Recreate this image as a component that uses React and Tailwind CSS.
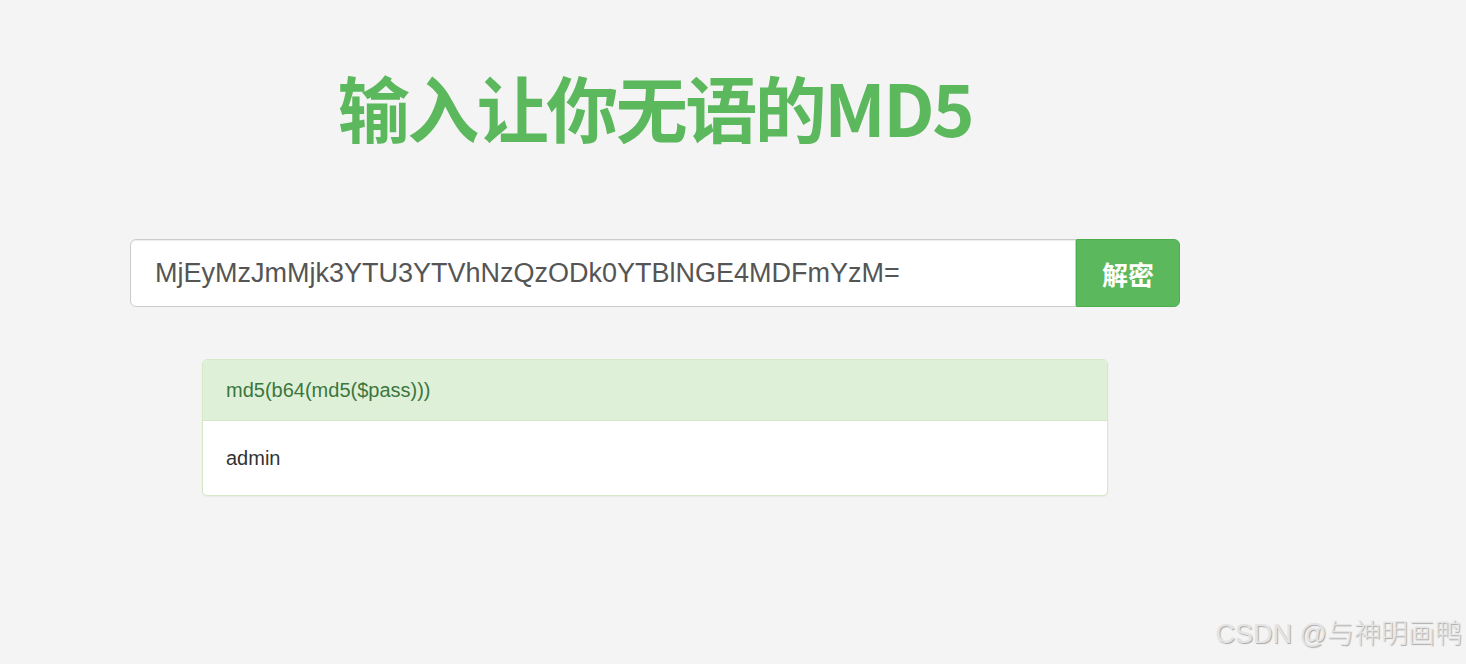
export default function App() {
  return (
    <div className="relative min-h-[664px] w-full bg-[#f4f4f4] font-['Liberation_Sans','Noto_Sans_CJK_SC',sans-serif] overflow-hidden">
      <div className="ml-[130px] w-[1050px] pt-[54px]">
        <h1 className="text-center text-[72px] leading-[104px] font-bold text-[#5cb85c] font-['Noto_Sans_CJK_SC',sans-serif] tracking-[-2.5px]">
          输入让你无语的MD5
        </h1>

        <div className="mt-[81px] flex h-[68px]">
          <input
            className="flex-1 rounded-l-[6px] border border-[#ccc] bg-white px-6 text-[27px] text-[#555] outline-none shadow-[inset_0_1px_1px_rgba(0,0,0,0.075)]"
            defaultValue="MjEyMzJmMjk3YTU3YTVhNzQzODk0YTBlNGE4MDFmYzM="
          />
          <button className="w-[104px] rounded-r-[6px] border border-[#4cae4c] bg-[#5cb85c] text-[26px] font-bold text-white font-['Noto_Sans_CJK_SC',sans-serif]">
            解密
          </button>
        </div>

        <div className="mx-[72px] mt-[52px] overflow-hidden rounded-[5px] border border-[#d6e9c6] bg-white shadow-[0_1px_2px_rgba(0,0,0,0.05)]">
          <div className="flex h-[61px] items-center border-b border-[#d6e9c6] bg-[#dff0d8] px-[23px] text-[20px] text-[#3c763d]">
            md5(b64(md5($pass)))
          </div>
          <div className="flex h-[74px] items-center px-[23px] text-[20px] text-[#333]">
            admin
          </div>
        </div>
      </div>

      <div className="absolute bottom-[10px] right-[4px] text-[27px] font-light text-[#e4e4e4] [text-shadow:1px_1px_1px_#a8a8a8] font-['Liberation_Sans','Noto_Sans_CJK_SC',sans-serif]">
        CSDN @与神明画鸭
      </div>
    </div>
  );
}
